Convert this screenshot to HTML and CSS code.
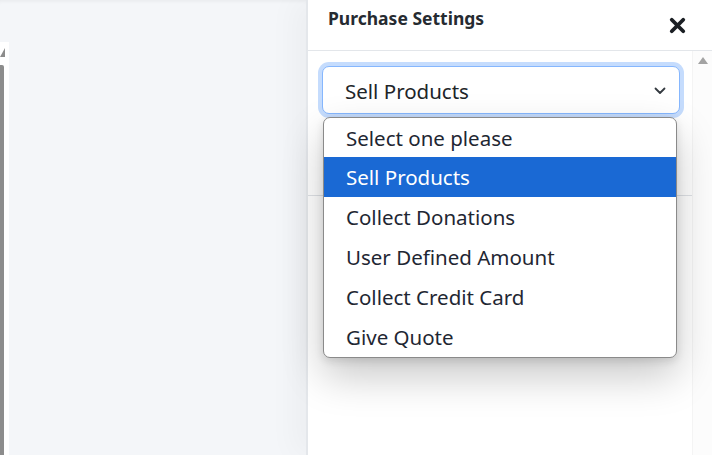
FILE: index.html
```html
<!DOCTYPE html>
<html>
<head>
<meta charset="utf-8">
<link rel="stylesheet" href="styles.css">
</head>
<body>
<div class="page">
  <div class="backdrop">
    <div class="left-scroll">
      <div class="ls-arrow"></div>
      <div class="ls-thumb"></div>
    </div>
  </div>
  <aside class="panel">
    <header class="panel-head">
      <h2 class="panel-title">Purchase Settings</h2>
      <button class="close-btn" aria-label="Close">
        <svg width="17" height="17" viewBox="0 0 16 16"><path d="M2.6 2.6 L13.4 13.4 M13.4 2.6 L2.6 13.4" stroke="#1b1f24" stroke-width="3.6" stroke-linecap="round" fill="none"/></svg>
      </button>
    </header>
    <div class="panel-body">
      <div class="content">
        <div class="select-wrap">
          <div class="select">
            <span class="select-value">Sell Products</span>
            <svg class="chev" width="12" height="8" viewBox="0 0 12 8"><path d="M1.5 1.5 L6 6 L10.5 1.5" stroke="#343a40" stroke-width="1.8" fill="none" stroke-linecap="round" stroke-linejoin="round"/></svg>
          </div>
          <ul class="options">
            <li class="opt">Select one please</li>
            <li class="opt sel">Sell Products</li>
            <li class="opt">Collect Donations</li>
            <li class="opt">User Defined Amount</li>
            <li class="opt">Collect Credit Card</li>
            <li class="opt">Give Quote</li>
          </ul>
        </div>
        <div class="field-label">Fee Options</div>
        <div class="rule"></div>
      </div>
      <div class="vscroll">
        <div class="vs-arrow"></div>
      </div>
    </div>
  </aside>
</div>
</body>
</html>
```

FILE: styles.css
```css
* { box-sizing: border-box; }
html, body { margin: 0; padding: 0; }
body {
  width: 712px;
  height: 455px;
  overflow: hidden;
  font-family: "Noto Sans", "Open Sans", sans-serif;
  color: #212529;
  background: #f4f6f9;
}
.page {
  display: flex;
  width: 712px;
  height: 455px;
}
.backdrop {
  flex: 0 0 306px;
  background: #f4f6f9;
  box-shadow: inset 0 4px 4px -3px rgba(0,0,0,0.06);
  padding-top: 42px;
  display: flex;
}
.left-scroll {
  width: 9px;
  background: #ffffff;
  display: flex;
  flex-direction: column;
  padding-top: 6px;
}
.ls-arrow {
  width: 0;
  height: 0;
  border-left: 5px solid transparent;
  border-bottom: 9px solid #8c8c8c;
  margin-bottom: 8px;
}
.ls-thumb {
  width: 4px;
  flex: 1;
  background: #8c8c8c;
  border-top-right-radius: 2px;
}
.panel {
  flex: 1;
  background: #fff;
  border-left: 2px solid #e4e7eb;
  box-shadow: -12px 0 28px rgba(0,0,0,0.035);
  display: flex;
  flex-direction: column;
}
.panel-head {
  height: 51px;
  border-bottom: 1px solid #e3e6ea;
  display: flex;
  align-items: flex-start;
  justify-content: space-between;
  padding: 0 26px 0 20px;
}
.panel-title {
  margin: 6px 0 0 0;
  font-size: 17.5px;
  font-weight: 700;
  color: #262b31;
}
.close-btn {
  border: 0;
  background: none;
  padding: 0;
  margin-top: 17px;
  width: 17px;
  height: 17px;
  display: flex;
}
.panel-body {
  flex: 1;
  display: flex;
  min-height: 0;
}
.content {
  flex: 1;
  padding: 15px 12px 0 14px;
  display: flex;
  flex-direction: column;
}
.select-wrap {
  position: relative;
}
.select {
  height: 48px;
  border: 1px solid #86b7fe;
  border-radius: 7px;
  box-shadow: 0 0 0 4px #c5dcfd;
  display: flex;
  align-items: center;
  justify-content: space-between;
  padding: 0 13px 0 22px;
  background: #fff;
}
.select-value {
  font-size: 20.5px;
  color: #212529;
  margin-top: 2px;
}
.chev { margin-top: 1px; }
.options {
  position: absolute;
  left: 1px;
  top: 51px;
  width: 354px;
  margin: 0;
  padding: 0;
  list-style: none;
  background: #fff;
  border: 1px solid #8a8a8a;
  border-radius: 7px;
  overflow: hidden;
  box-shadow: 0 18px 40px rgba(0,0,0,0.22), 0 3px 8px rgba(0,0,0,0.12);
  z-index: 5;
}
.opt {
  height: 40px;
  line-height: 40px;
  padding-left: 22px;
  font-size: 20.5px;
  color: #1f2733;
  white-space: nowrap;
}
.opt:first-child { height: 39px; line-height: 40px; }
.opt.sel {
  background: #1a69d4;
  color: #fff;
}
.field-label {
  margin-top: 46px;
  font-size: 16px;
  color: #4a5058;
  line-height: 22px;
}
.rule {
  margin: 13px -12px 0 -14px;
  border-top: 1px solid #dfe2e6;
}
.vscroll {
  flex: 0 0 20px;
  background: #fcfcfc;
  border-left: 1px solid #f4f4f4;
  padding-top: 6px;
  display: flex;
  justify-content: center;
}
.vs-arrow {
  width: 0;
  height: 0;
  border-left: 5px solid transparent;
  border-right: 5px solid transparent;
  border-bottom: 7px solid #a3a3a3;
}
```
